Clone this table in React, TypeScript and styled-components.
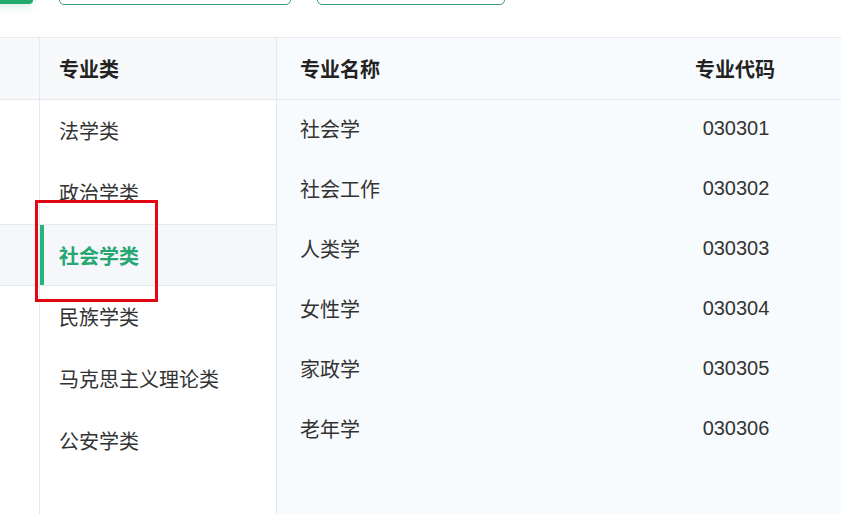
import React from "react";
import styled, { createGlobalStyle } from "styled-components";

const Global = createGlobalStyle`
  html, body { margin: 0; padding: 0; background: #ffffff; }
  body {
    font-family: "Liberation Sans", "Noto Sans CJK SC", sans-serif;
    color: #333333;
    width: 841px;
    height: 514px;
    overflow: hidden;
  }
  * { box-sizing: border-box; }
`;

const Page = styled.div`
  position: relative;
  width: 841px;
  height: 514px;
  overflow: hidden;
  display: flex;
  flex-direction: column;
`;

const Toolbar = styled.div`
  height: 38px;
  flex: none;
  display: flex;
  align-items: flex-start;
  border-bottom: 1px solid #e6eaee;
  overflow: visible;
`;

const PrimaryButton = styled.div`
  width: 80px;
  height: 32px;
  margin-top: -28px;
  margin-left: -47px;
  background: #23a86d;
  border-radius: 4px;
  box-shadow: 0 3px 8px rgba(35, 168, 109, 0.18);
`;

const SearchInput = styled.div<{ $w: number; $ml: number }>`
  width: ${(p) => p.$w}px;
  height: 32px;
  margin-top: -27px;
  margin-left: ${(p) => p.$ml}px;
  border: 1px solid #3a9c7d;
  border-radius: 5px;
  background: #ffffff;
`;

const Table = styled.div`
  flex: 1;
  display: flex;
  align-items: stretch;
`;

const Column = styled.div<{ $w?: number; $bg?: string; $last?: boolean }>`
  ${(p) => (p.$w ? `width: ${p.$w}px; flex: none;` : "flex: 1;")}
  background: ${(p) => p.$bg || "#ffffff"};
  border-right: ${(p) => (p.$last ? "none" : "1px solid #e6eaee")};
  display: flex;
  flex-direction: column;
`;

const HeadCell = styled.div<{ $bg?: string }>`
  height: 62px;
  flex: none;
  display: flex;
  align-items: center;
  padding-left: 19px;
  background: ${(p) => p.$bg || "#f7f9fb"};
  border-bottom: 1px solid #e4e8ec;
  font-size: 20px;
  font-weight: 700;
  color: #222222;
`;

const CatRow = styled.div<{ $active?: boolean }>`
  position: relative;
  height: 62px;
  flex: none;
  display: flex;
  align-items: center;
  padding-left: 19px;
  padding-bottom: ${(p) => (p.$active ? 0 : 2)}px;
  font-size: 20px;
  white-space: nowrap;
  color: ${(p) => (p.$active ? "#25a771" : "#333333")};
  font-weight: ${(p) => (p.$active ? 700 : 400)};
  background: ${(p) => (p.$active ? "#f5f7fa" : "transparent")};
  border-top: 1px solid ${(p) => (p.$active ? "#e6eaee" : "transparent")};
  border-bottom: 1px solid ${(p) => (p.$active ? "#e6eaee" : "transparent")};
`;

const ActiveBar = styled.span`
  position: absolute;
  left: 0;
  top: 0;
  bottom: 0;
  width: 4px;
  background: #27b47a;
`;

const MajorHead = styled.div`
  height: 62px;
  flex: none;
  display: grid;
  grid-template-columns: 1fr 180px;
  align-items: center;
  padding: 0 17px 0 23px;
  border-bottom: 1px solid #e4e8ec;
  font-size: 20px;
  font-weight: 700;
  color: #222222;
`;

const MajorRow = styled.div`
  height: 60px;
  flex: none;
  display: grid;
  grid-template-columns: 1fr 180px;
  align-items: center;
  padding: 0 17px 3px 23px;
  font-size: 20px;
  color: #333333;
`;

const CodeCell = styled.span<{ $shift?: number }>`
  text-align: center;
  padding-left: ${(p) => p.$shift || 0}px;
`;

const Highlight = styled.div`
  position: absolute;
  left: 35px;
  top: 200px;
  width: 123px;
  height: 102px;
  border: 3px solid #e30613;
  pointer-events: none;
`;

const categories = ["法学类", "政治学类", "社会学类", "民族学类", "马克思主义理论类", "公安学类"];
const majors: [string, string][] = [
  ["社会学", "030301"],
  ["社会工作", "030302"],
  ["人类学", "030303"],
  ["女性学", "030304"],
  ["家政学", "030305"],
  ["老年学", "030306"],
];

export default function App() {
  return (
    <Page>
      <Global />
      <Toolbar>
        <PrimaryButton />
        <SearchInput $w={232} $ml={26} />
        <SearchInput $w={188} $ml={26} />
      </Toolbar>
      <Table>
        <Column $w={40}>
          <HeadCell />
          {categories.map((c, i) => (
            <CatRow key={c} $active={i === 2} />
          ))}
        </Column>
        <Column $w={237}>
          <HeadCell>专业类</HeadCell>
          {categories.map((c, i) => (
            <CatRow key={c} $active={i === 2}>
              {i === 2 && <ActiveBar />}
              {c}
            </CatRow>
          ))}
        </Column>
        <Column $bg="#f8fbfd" $last>
          <MajorHead>
            <span>专业名称</span>
            <CodeCell $shift={2}>专业代码</CodeCell>
          </MajorHead>
          {majors.map(([n, code]) => (
            <MajorRow key={code}>
              <span>{n}</span>
              <CodeCell $shift={4}>{code}</CodeCell>
            </MajorRow>
          ))}
        </Column>
      </Table>
      <Highlight />
    </Page>
  );
}
